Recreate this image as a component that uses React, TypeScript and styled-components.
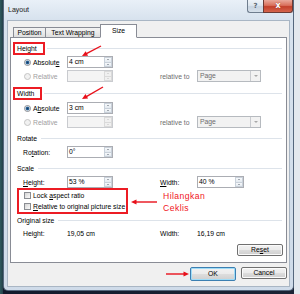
import React from "react";
import styled, { createGlobalStyle } from "styled-components";

const Global = createGlobalStyle`
  html, body { margin: 0; padding: 0; }
  body {
    width: 300px; height: 294px; overflow: hidden;
    font-family: "Liberation Sans", Arial, sans-serif;
    font-size: 6.8px; color: #000;
  }
`;

const Desktop = styled.div`
  position: relative;
  width: 300px;
  height: 294px;
  box-sizing: border-box;
  padding: 0 6px 3px 3px;
  background: linear-gradient(90deg, #2f5a5e 0, #24404a 3px, #121a2c 3px, #1b2335 294px, #e3e8ee 294px);
`;

const Window = styled.div`
  height: 291px;
  box-sizing: border-box;
  border: 1px solid #55677d;
  border-top: none;
  border-radius: 0 0 5px 5px;
  background: linear-gradient(180deg, #e9f0f8 0, #d7e2ee 20px, #cfdbe9 100%);
  display: flex;
  flex-direction: column;
`;

const TitleBar = styled.div`
  height: 20px;
  display: flex;
  align-items: flex-start;
  flex-shrink: 0;
`;

const Title = styled.div`
  flex: 1;
  line-height: 20px;
  padding-left: 4px;
  font-size: 7px;
  color: #1a1a1a;
`;

const CaptionButton = styled.div<{ $kind: "help" | "close" }>`
  height: 13px;
  width: ${(p) => (p.$kind === "close" ? 30 : 16)}px;
  box-sizing: border-box;
  border: 1px solid ${(p) => (p.$kind === "close" ? "#6b3a34" : "#6f7d8e")};
  border-top: none;
  ${(p) => (p.$kind === "help" ? "border-right: none;" : "")}
  border-radius: ${(p) => (p.$kind === "close" ? "0 0 3px 0" : "0 0 0 3px")};
  background: ${(p) =>
    p.$kind === "close"
      ? "linear-gradient(180deg, #e9a99b 0%, #d9705c 45%, #c3402b 55%, #d5644c 100%)"
      : "linear-gradient(180deg, #eef3f8 0%, #dde6ef 45%, #c8d4e1 55%, #d6e0ea 100%)"};
  color: ${(p) => (p.$kind === "close" ? "#ffffff" : "#5d6773")};
  font-family: "DejaVu Sans", sans-serif;
  font-weight: bold;
  font-size: ${(p) => (p.$kind === "close" ? 8 : 7)}px;
  line-height: 12px;
  text-align: center;
  text-shadow: ${(p) => (p.$kind === "close" ? "0 0 1px #7a2a1e" : "none")};
`;

const Body = styled.div`
  flex: 1;
  margin: 0 3px 3px 3px;
  box-sizing: border-box;
  border: 1px solid #a9b6c4;
  background: #f0f0f0;
  display: flex;
  flex-direction: column;
  padding: 0 2px 4px 2px;
`;

const TabRow = styled.div`
  height: 17px;
  margin-bottom: -1px;
  display: flex;
  align-items: flex-end;
  padding-left: 3px;
  position: relative;
  z-index: 1;
`;

const Tab = styled.div<{ $active?: boolean; $w: number }>`
  width: ${(p) => p.$w}px;
  height: ${(p) => (p.$active ? 14 : 11)}px;
  box-sizing: border-box;
  border: 1px solid #898c95;
  ${(p) => (p.$active ? "border-bottom-color: #ffffff;" : "")}
  margin-left: -1px;
  &:first-child { margin-left: 0; }
  background: ${(p) =>
    p.$active ? "#ffffff" : "linear-gradient(180deg, #f3f3f3 0%, #ebebeb 50%, #dedede 100%)"};
  display: flex;
  align-items: center;
  justify-content: center;
  line-height: 8px;
`;

const Panel = styled.div`
  height: 226px;
  box-sizing: border-box;
  border: 1px solid #898c95;
  background: #ffffff;
  padding-top: 4px;
  display: flex;
  flex-direction: column;
`;

const SectionHeader = styled.div<{ $mt: number }>`
  height: 13px;
  margin-top: ${(p) => p.$mt}px;
  padding-left: 2px;
  padding-right: 4px;
  display: flex;
  align-items: center;
  gap: 2px;
  flex-shrink: 0;
`;

const SectionLabel = styled.div<{ $boxed?: boolean }>`
  height: 13px;
  box-sizing: border-box;
  border: 2px solid ${(p) => (p.$boxed ? "#ec1c24" : "transparent")};
  padding: 0 ${(p) => (p.$boxed ? 6 : 0)}px 0 2px;
  line-height: 9px;
  white-space: nowrap;
`;

const Rule = styled.div`
  flex: 1;
  height: 1px;
  background: #dde3ea;
`;

const FieldRow = styled.div<{ $mt: number }>`
  height: 12px;
  margin-top: ${(p) => p.$mt}px;
  padding-left: 13px;
  display: grid;
  grid-template-columns: 43px 46px 47px 37px 64px;
  align-items: center;
  flex-shrink: 0;
`;

const Cell = styled.div<{ $shift?: number; $muted?: boolean }>`
  display: flex;
  align-items: center;
  gap: 2px;
  white-space: nowrap;
  line-height: 9px;
  margin-left: ${(p) => p.$shift ?? 0}px;
  color: ${(p) => (p.$muted ? "#6d6d6d" : "#000")};
`;

const Label = styled.span<{ $disabled?: boolean }>`
  color: ${(p) => (p.$disabled ? "#a0a0a0" : "inherit")};
`;

const Radio = styled.span<{ $checked?: boolean; $disabled?: boolean }>`
  width: 7px;
  height: 7px;
  box-sizing: border-box;
  border-radius: 50%;
  border: 1px solid ${(p) => (p.$disabled ? "#c4c4c4" : "#8a8d92")};
  background: ${(p) =>
    p.$checked
      ? "radial-gradient(circle, #17365e 0, #2d6ea5 1.6px, #dfe7ef 2.2px, #f4f4f4 100%)"
      : p.$disabled
      ? "#f1f1f1"
      : "linear-gradient(135deg, #d6d6d6, #fbfbfb)"};
  flex-shrink: 0;
`;

const Check = styled.span`
  width: 7px;
  height: 7px;
  box-sizing: border-box;
  border: 1px solid #8a8d92;
  background: linear-gradient(135deg, #d4d4d4, #fbfbfb);
  flex-shrink: 0;
`;

const InputBox = styled.div<{ $disabled?: boolean; $w?: number }>`
  width: ${(p) => p.$w ?? 46}px;
  height: 12px;
  box-sizing: border-box;
  border: 1px solid ${(p) => (p.$disabled ? "#c9cbcf" : "#abadb3")};
  background: ${(p) => (p.$disabled ? "#f4f4f4" : "#ffffff")};
  display: flex;
  align-items: stretch;
`;

const InputText = styled.div`
  flex: 1;
  padding-left: 1px;
  line-height: 10px;
  white-space: nowrap;
`;

const Spin = styled.div`
  width: 8px;
  display: flex;
  flex-direction: column;
`;

const SpinHalf = styled.div<{ $dir: "up" | "down"; $disabled?: boolean }>`
  flex: 1;
  box-sizing: border-box;
  border: 1px solid ${(p) => (p.$disabled ? "#dadada" : "#c9d1da")};
  ${(p) => (p.$dir === "down" ? "border-top: none;" : "")}
  background: ${(p) => (p.$disabled ? "#f0f0f0" : "linear-gradient(180deg, #f7f9fb, #e3e9ef)")};
  display: flex;
  align-items: center;
  justify-content: center;
  &::after {
    content: "";
    border-left: 1.5px solid transparent;
    border-right: 1.5px solid transparent;
    ${(p) => (p.$dir === "up" ? "border-bottom" : "border-top")}: 1.5px solid
      ${(p) => (p.$disabled ? "#c0c0c0" : "#56606c")};
  }
`;

const Select = styled.div`
  width: 64px;
  height: 12px;
  box-sizing: border-box;
  border: 1px solid #b6babf;
  background: #f2f2f2;
  display: flex;
  align-items: stretch;
  color: #6d6d6d;
`;

const SelectText = styled.div`
  flex: 1;
  padding-left: 2px;
  line-height: 10px;
`;

const SelectArrow = styled.div`
  width: 10px;
  box-sizing: border-box;
  border-left: 1px solid #c9cbcf;
  display: flex;
  align-items: center;
  justify-content: center;
  &::after {
    content: "";
    border-left: 2px solid transparent;
    border-right: 2px solid transparent;
    border-top: 2px solid #a8a8a8;
  }
`;

const CheckArea = styled.div`
  height: 26px;
  display: flex;
  align-items: center;
  flex-shrink: 0;
`;

const RedBox = styled.div`
  flex: none;
  width: 111px;
  height: 26px;
  margin-left: 6px;
  box-sizing: border-box;
  border: 2px solid #ec1c24;
  padding-left: 5px;
  display: flex;
  flex-direction: column;
`;

const CheckRow = styled.div`
  height: 11px;
  display: flex;
  align-items: center;
  gap: 2px;
  line-height: 9px;
  white-space: nowrap;
`;

const Note = styled.div`
  margin-left: 35px;
  margin-top: 2px;
  color: #f0141c;
  font-family: "Liberation Sans", Arial, sans-serif;
  font-size: 8.6px;
  letter-spacing: 0.45px;
  line-height: 12px;
`;

const ButtonRow = styled.div<{ $mt: number; $pr: number }>`
  margin-top: ${(p) => p.$mt}px;
  padding-right: ${(p) => p.$pr}px;
  display: flex;
  justify-content: flex-end;
  gap: 5px;
  flex-shrink: 0;
`;

const Button = styled.div<{ $default?: boolean }>`
  width: 46px;
  height: ${(p) => (p.$default ? 14 : 12)}px;
  box-sizing: border-box;
  border: 1px solid ${(p) => (p.$default ? "#3c7fb1" : "#707070")};
  border-radius: 2px;
  background: linear-gradient(180deg, #f2f2f2 0%, #ebebeb 49%, #dddddd 51%, #cfcfcf 100%);
  box-shadow: inset 0 0 0 1px ${(p) => (p.$default ? "#9fdcf7" : "#fbfbfb")};
  display: flex;
  align-items: center;
  justify-content: center;
  line-height: 8px;
`;

const Overlay = styled.svg`
  position: absolute;
  left: 0;
  top: 0;
  pointer-events: none;
`;

function arrow(x1: number, y1: number, x2: number, y2: number) {
  const dx = x2 - x1;
  const dy = y2 - y1;
  const L = Math.hypot(dx, dy);
  const ux = dx / L;
  const uy = dy / L;
  const hl = 5.5;
  const hw = 2.6;
  const bx = x2 - ux * hl;
  const by = y2 - uy * hl;
  const px = -uy;
  const py = ux;
  return {
    line: { x1, y1, x2: bx + ux, y2: by + uy },
    head: `${x2},${y2} ${bx + px * hw},${by + py * hw} ${bx - px * hw},${by - py * hw}`,
  };
}

const arrows = [
  arrow(101, 46, 82, 56),
  arrow(103, 87, 82, 99),
  arrow(157, 202, 131, 202),
  arrow(166, 274, 189, 274),
];

function SpinBox({ value, disabled, w }: { value?: string; disabled?: boolean; w?: number }) {
  return (
    <InputBox $disabled={disabled} $w={w}>
      <InputText>{value}</InputText>
      <Spin>
        <SpinHalf $dir="up" $disabled={disabled} />
        <SpinHalf $dir="down" $disabled={disabled} />
      </Spin>
    </InputBox>
  );
}

function PageSelect() {
  return (
    <Select>
      <SelectText>Page</SelectText>
      <SelectArrow />
    </Select>
  );
}

export default function App() {
  return (
    <>
      <Global />
      <Desktop>
        <Window>
          <TitleBar>
            <Title>Layout</Title>
            <CaptionButton $kind="help">?</CaptionButton>
            <CaptionButton $kind="close">x</CaptionButton>
          </TitleBar>
          <Body>
            <TabRow>
              <Tab $w={33}>Position</Tab>
              <Tab $w={56}>Text Wrapping</Tab>
              <Tab $w={37} $active>
                Size
              </Tab>
            </TabRow>
            <Panel>
              <SectionHeader $mt={0}>
                <SectionLabel $boxed>Height</SectionLabel>
                <Rule />
              </SectionHeader>
              <FieldRow $mt={1}>
                <Cell>
                  <Radio $checked />
                  <Label>
                    Absolut<u>e</u>
                  </Label>
                </Cell>
                <SpinBox value="4 cm" />
              </FieldRow>
              <FieldRow $mt={2}>
                <Cell>
                  <Radio $disabled />
                  <Label $disabled>Relative</Label>
                </Cell>
                <SpinBox disabled />
                <span />
                <Cell $muted>relative to</Cell>
                <PageSelect />
              </FieldRow>
              <SectionHeader $mt={5}>
                <SectionLabel $boxed>Width</SectionLabel>
                <Rule />
              </SectionHeader>
              <FieldRow $mt={2}>
                <Cell>
                  <Radio $checked />
                  <Label>
                    A<u>b</u>solute
                  </Label>
                </Cell>
                <SpinBox value="3 cm" />
              </FieldRow>
              <FieldRow $mt={2}>
                <Cell>
                  <Radio $disabled />
                  <Label $disabled>Relative</Label>
                </Cell>
                <SpinBox disabled />
                <span />
                <Cell $muted>relative to</Cell>
                <PageSelect />
              </FieldRow>
              <SectionHeader $mt={4}>
                <SectionLabel>Rotate</SectionLabel>
                <Rule />
              </SectionHeader>
              <FieldRow $mt={1}>
                <Cell $shift={-1}>
                  <Label>
                    Ro<u>t</u>ation:
                  </Label>
                </Cell>
                <SpinBox value="0°" />
              </FieldRow>
              <SectionHeader $mt={4}>
                <SectionLabel>Scale</SectionLabel>
                <Rule />
              </SectionHeader>
              <FieldRow $mt={1}>
                <Cell $shift={-1}>
                  <Label>
                    <u>H</u>eight:
                  </Label>
                </Cell>
                <SpinBox value="53 %" />
                <span />
                <Cell>
                  <Label>
                    <u>W</u>idth:
                  </Label>
                </Cell>
                <SpinBox value="40 %" w={47} />
              </FieldRow>
              <CheckArea>
                <RedBox>
                  <CheckRow>
                    <Check />
                    <Label>
                      Lock <u>a</u>spect ratio
                    </Label>
                  </CheckRow>
                  <CheckRow>
                    <Check />
                    <Label>
                      <u>R</u>elative to original picture size
                    </Label>
                  </CheckRow>
                </RedBox>
                <Note>
                  Hilangkan
                  <br />
                  Ceklis
                </Note>
              </CheckArea>
              <SectionHeader $mt={0}>
                <SectionLabel>Original size</SectionLabel>
                <Rule />
              </SectionHeader>
              <FieldRow $mt={0}>
                <Cell $shift={-1}>Height:</Cell>
                <Cell>19,05 cm</Cell>
                <span />
                <Cell>Width:</Cell>
                <Cell>16,19 cm</Cell>
              </FieldRow>
              <ButtonRow $mt={5} $pr={3}>
                <Button>
                  Re<u>s</u>et
                </Button>
              </ButtonRow>
            </Panel>
            <ButtonRow $mt={4} $pr={0}>
              <Button $default>OK</Button>
              <Button>Cancel</Button>
            </ButtonRow>
          </Body>
        </Window>
        <Overlay width={300} height={294} viewBox="0 0 300 294">
          {arrows.map((a, i) => (
            <g key={i}>
              <line {...a.line} stroke="#e8101a" strokeWidth={1.4} />
              <polygon points={a.head} fill="#e8101a" />
            </g>
          ))}
        </Overlay>
      </Desktop>
    </>
  );
}
